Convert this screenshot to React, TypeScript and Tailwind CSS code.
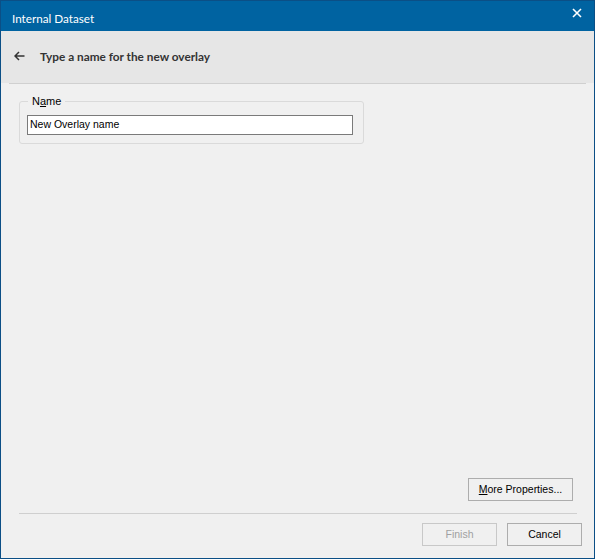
import React from "react";

export default function App() {
  const ui = { fontFamily: 'Lato, "Noto Sans", sans-serif' };
  const ctl = { fontFamily: '"Liberation Sans", Arial, sans-serif' };
  return (
    <div
      className="w-[595px] h-[559px] border border-[#0b4f86] bg-[#f0f0f0] flex flex-col text-[10.5px] text-black"
      style={ctl}
    >
      <div className="h-[30px] bg-[#0063a1] flex justify-between pl-[11px] pr-[12px] text-white shrink-0" style={ui}>
        <span className="text-[11.7px] mt-[9px] leading-[16px]">Internal Dataset</span>
        <svg width="10" height="10" viewBox="0 0 10 10" className="mt-[7px]">
          <path d="M1 1 L9 9 M9 1 L1 9" stroke="white" strokeWidth="1.6" />
        </svg>
      </div>
      <div className="h-[52px] bg-[#e6e6e6] flex items-center pl-[13px] shrink-0" style={ui}>
        <svg width="12" height="10" viewBox="0 0 12 10" className="mt-[-2px]">
          <path d="M1 5 H10.5 M5 1 L1 5 L5 9" stroke="#333" strokeWidth="1.5" fill="none" />
        </svg>
        <span className="ml-[14px] font-bold text-[#333] text-[11.8px]">
          Type a name for the new overlay
        </span>
      </div>
      <div className="h-px bg-[#d0d0d0] mx-[8px]" />
      <div className="flex-1 flex flex-col px-[18px]">
        <div className="relative mt-[17px] w-[345px] h-[43px] border border-[#dadada] rounded-[3px]">
          <span className="absolute left-[8px] top-[-9px] bg-[#f0f0f0] px-[4px] text-[11px] leading-[16px]">
            N<span className="underline">a</span>me
          </span>
          <div className="absolute left-[7px] top-[13px] w-[326px] h-[20px] border border-[#7a7a7a] bg-white flex items-center px-[2px] text-[10.5px]">
            New Overlay name
          </div>
        </div>
        <div className="flex-1" />
        <div className="flex justify-end pr-[3px]">
          <button className="w-[105px] h-[23px] border border-[#adadad] bg-[#f0f0f0] text-[10.5px] flex items-center justify-center">
            <span><span className="underline">M</span>ore Properties...</span>
          </button>
        </div>
        <div className="h-px bg-[#cfcfcf] mt-[12px] ml-0 mr-[-1px]" />
        <div className="flex justify-end gap-[10px] mt-[9px] mb-[12px] mr-[-6px]">
          <button className="w-[75px] h-[23px] border border-[#c8c8c8] bg-[#f0f0f0] text-[#a0a0a0] text-[10.5px]">
            Finish
          </button>
          <button className="w-[75px] h-[23px] border border-[#adadad] bg-[#f0f0f0] text-[10.5px]">
            Cancel
          </button>
        </div>
      </div>
    </div>
  );
}
